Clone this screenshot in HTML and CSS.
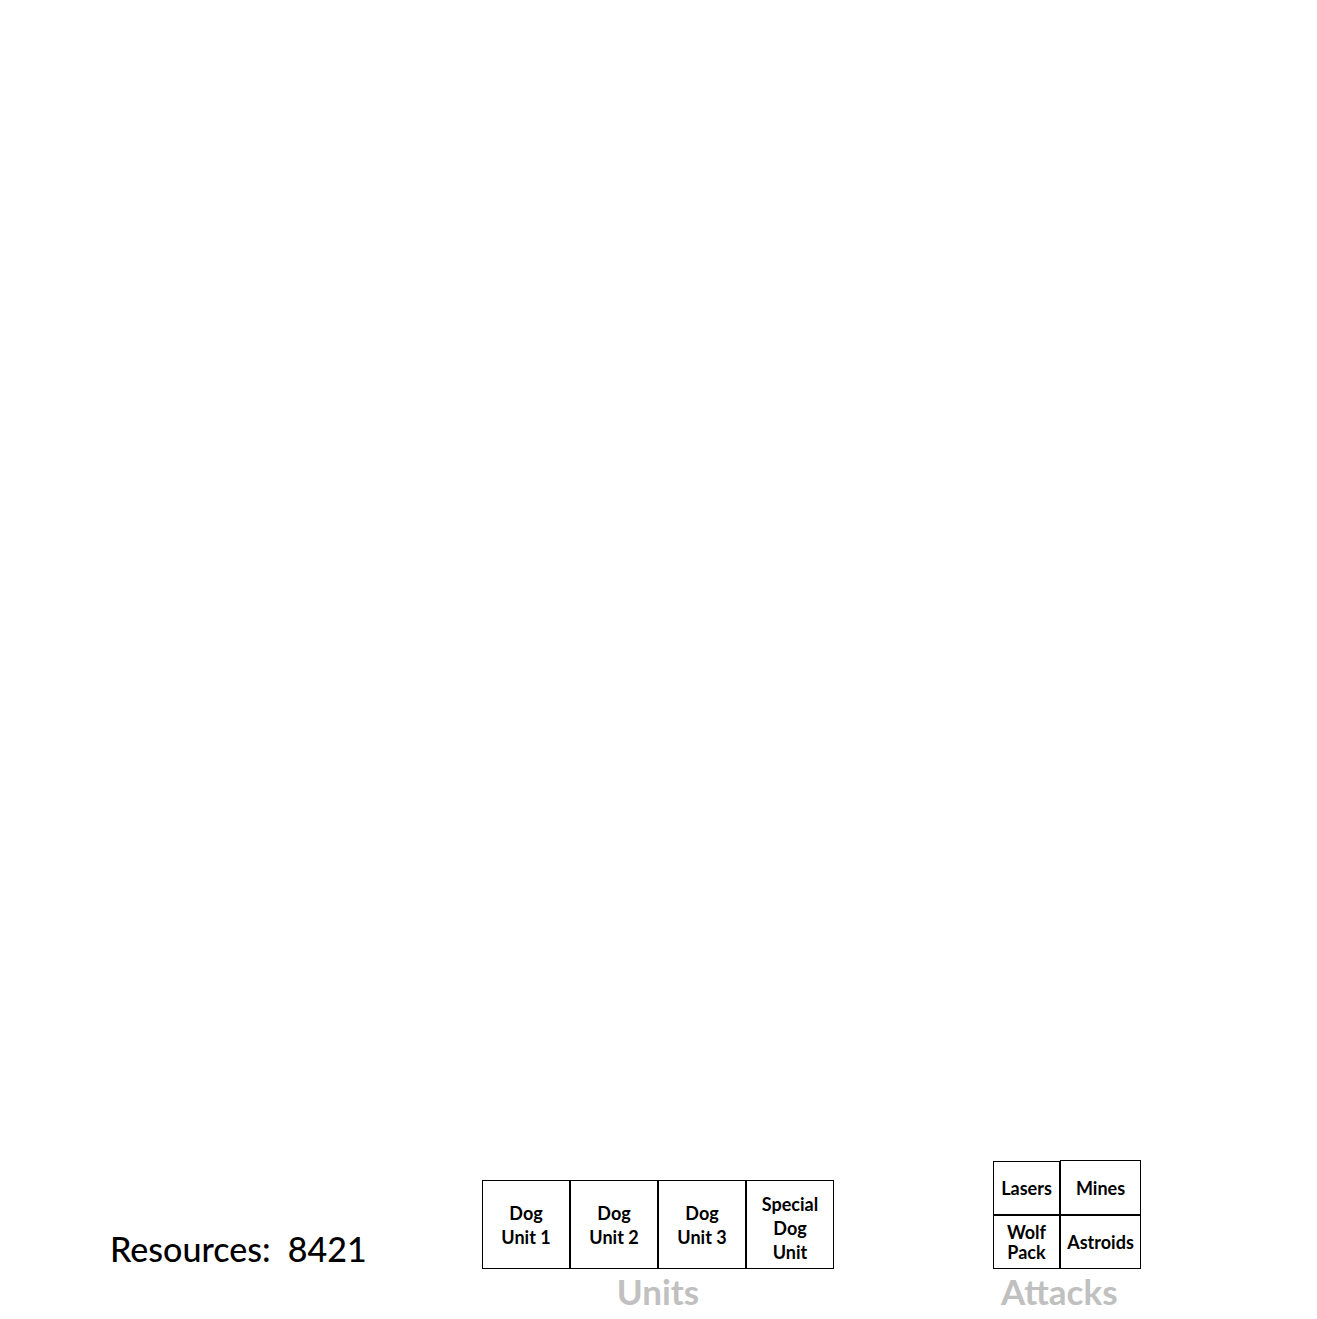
FILE: index.html
```html
<!DOCTYPE html>
<html>
<head>
<meta charset="utf-8">
<link rel="stylesheet" href="styles.css">
</head>
<body>
<div class="bar">
  <div class="resources">Resources:&nbsp; 8421</div>
  <div class="group units">
    <div class="boxes">
      <div class="box">Dog<br>Unit 1</div>
      <div class="box">Dog<br>Unit 2</div>
      <div class="box">Dog<br>Unit 3</div>
      <div class="box tall">Special<br>Dog<br>Unit</div>
    </div>
    <div class="label">Units</div>
  </div>
  <div class="group attacks">
    <div class="grid">
      <div class="cell c1">Lasers</div>
      <div class="cell c2 raised">Mines</div>
      <div class="cell c1">Wolf<br>Pack</div>
      <div class="cell c2">Astroids</div>
    </div>
    <div class="label">Attacks</div>
  </div>
</div>
</body>
</html>
```
FILE: styles.css
```css
html, body {
  margin: 0;
  padding: 0;
  background: #fff;
}
body {
  min-height: 1319px;
  display: flex;
  flex-direction: column;
  justify-content: flex-end;
  font-family: "Lato", "Liberation Sans", sans-serif;
  color: #000;
}
.bar {
  display: flex;
  align-items: flex-end;
  padding-left: 110px;
  padding-bottom: 6px;
}
.resources {
  width: 372px;
  font-size: 34px;
  font-weight: 500;
  line-height: 40px;
  margin-bottom: 44px;
  white-space: nowrap;
}
.group {
  display: flex;
  flex-direction: column;
  align-items: center;
}
.units {
  width: 352px;
}
.attacks {
  margin-left: 159px;
}
.boxes {
  display: flex;
}
.box {
  box-sizing: border-box;
  width: 88px;
  height: 89px;
  border: 1px solid #000;
  display: flex;
  align-items: center;
  justify-content: center;
  text-align: center;
  font-weight: 700;
  font-size: 18px;
  line-height: 24px;
}
.box.tall {
  padding-top: 6px;
}
.grid {
  display: grid;
  grid-template-columns: 67px 81px;
  grid-template-rows: 54px 54px;
}
.cell {
  box-sizing: border-box;
  border: 1px solid #000;
  display: flex;
  align-items: center;
  justify-content: center;
  text-align: center;
  font-weight: 700;
  font-size: 18px;
  line-height: 20px;
}
.raised {
  margin-top: -1px;
}
.label {
  font-size: 35px;
  line-height: 44px;
  color: #c0c0c0;
  font-weight: 700;
}
.attacks .label {
  align-self: flex-start;
  margin-left: 8px;
}
```
